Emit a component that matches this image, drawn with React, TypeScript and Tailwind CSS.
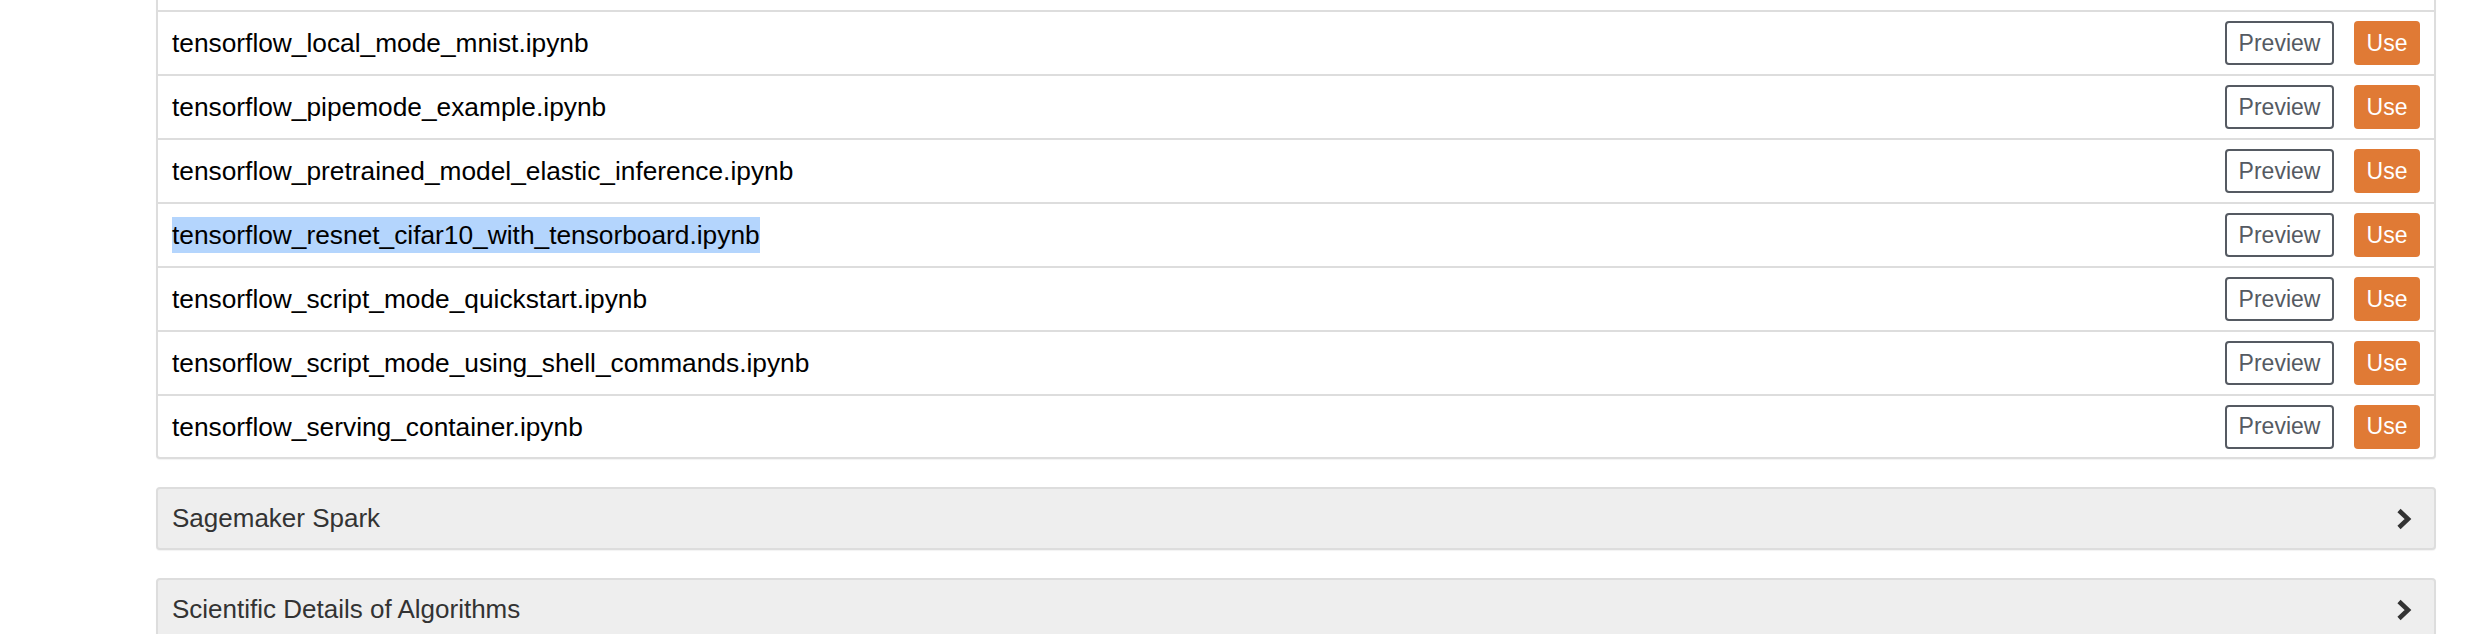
import React from "react";

const rows = [
  "tensorflow_iris_dnn_classifier_using_estimators.ipynb",
  "tensorflow_local_mode_mnist.ipynb",
  "tensorflow_pipemode_example.ipynb",
  "tensorflow_pretrained_model_elastic_inference.ipynb",
  "tensorflow_resnet_cifar10_with_tensorboard.ipynb",
  "tensorflow_script_mode_quickstart.ipynb",
  "tensorflow_script_mode_using_shell_commands.ipynb",
  "tensorflow_serving_container.ipynb",
];

function Chevron() {
  return (
    <svg width="16" height="24" viewBox="0 0 16 24" className="block">
      <path d="M3 3.5 L12 12 L3 20.5" fill="none" stroke="#333333" strokeWidth="4.6" strokeLinejoin="miter" />
    </svg>
  );
}

function Row({ name, first, last }: { name: string; first?: boolean; last?: boolean }) {
  const selected = name === "tensorflow_resnet_cifar10_with_tensorboard.ipynb";
  return (
    <div
      className={
        "flex items-center justify-between pl-[14px] pr-[14px] " +
        (last ? "h-[63px] " : "h-[64px] ") +
        (first ? "" : "border-t-2 border-[#dddddd]")
      }
    >
      <span className={"text-[26.3px] leading-[36px] text-black " + (selected ? "bg-[#b4d5fd]" : "")}>{name}</span>
      <div className="flex items-center gap-[20px]">
        <button className="w-[109px] h-[44px] border-2 border-[#555a62] rounded-[4px] bg-white text-[23px] text-[#555a62] flex items-center justify-center">
          Preview
        </button>
        <button className="w-[66px] h-[44px] rounded-[4px] bg-[#e07a35] text-[23px] text-white flex items-center justify-center">
          Use
        </button>
      </div>
    </div>
  );
}

function Accordion({ title }: { title: string }) {
  return (
    <div className="h-[63px] border-2 border-[#dddddd] rounded-[4px] bg-[#eeeeee] flex items-center justify-between pl-[14px] pr-[22px] shadow-[0_1px_1px_rgba(0,0,0,0.05)]">
      <span className="text-[26px] text-[#333333]">{title}</span>
      <Chevron />
    </div>
  );
}

export default function App() {
  return (
    <div className="w-[2472px] h-[634px] overflow-hidden bg-white font-['Liberation_Sans',Arial,Helvetica,sans-serif]">
      <div className="ml-[156px] w-[2280px] -mt-[56px] flex flex-col">
        <div className="border-2 border-[#dddddd] rounded-[4px] bg-white shadow-[0_1px_1px_rgba(0,0,0,0.05)]">
          {rows.map((r, i) => (
            <Row key={r} name={r} first={i === 0} last={i === rows.length - 1} />
          ))}
        </div>
        <div className="mt-[28px]">
          <Accordion title="Sagemaker Spark" />
        </div>
        <div className="mt-[28px]">
          <Accordion title="Scientific Details of Algorithms" />
        </div>
      </div>
    </div>
  );
}
